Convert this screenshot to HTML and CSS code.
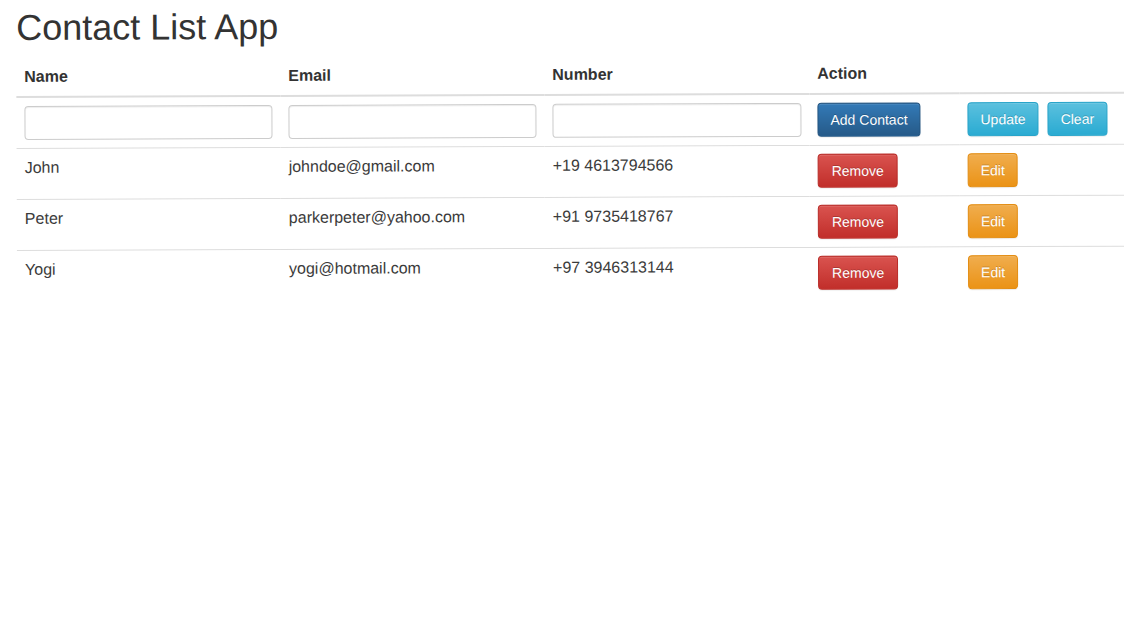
FILE: index.html
```html
<!DOCTYPE html>
<html lang="en">
<head>
<meta charset="utf-8">
<title>Contact List App</title>
<link rel="stylesheet" href="styles.css">
</head>
<body>
<div class="page">
  <h1 class="title">Contact List App</h1>
  <table class="contacts">
    <colgroup>
      <col class="c-name">
      <col class="c-email">
      <col class="c-number">
      <col class="c-action">
      <col class="c-extra">
    </colgroup>
    <thead>
      <tr>
        <th>Name</th>
        <th>Email</th>
        <th>Number</th>
        <th>Action</th>
        <th></th>
      </tr>
    </thead>
    <tbody>
      <tr>
        <td><input class="field" type="text"></td>
        <td><input class="field" type="text"></td>
        <td><input class="field" type="text"></td>
        <td><button class="btn btn-primary">Add Contact</button></td>
        <td><button class="btn btn-info">Update</button><button class="btn btn-info btn-gap">Clear</button></td>
      </tr>
      <tr>
        <td>John</td>
        <td>johndoe@gmail.com</td>
        <td>+19 4613794566</td>
        <td><button class="btn btn-danger">Remove</button></td>
        <td><button class="btn btn-warning">Edit</button></td>
      </tr>
      <tr>
        <td>Peter</td>
        <td>parkerpeter@yahoo.com</td>
        <td>+91 9735418767</td>
        <td><button class="btn btn-danger">Remove</button></td>
        <td><button class="btn btn-warning">Edit</button></td>
      </tr>
      <tr>
        <td>Yogi</td>
        <td>yogi@hotmail.com</td>
        <td>+97 3946313144</td>
        <td><button class="btn btn-danger">Remove</button></td>
        <td><button class="btn btn-warning">Edit</button></td>
      </tr>
    </tbody>
  </table>
</div>
</body>
</html>
```

FILE: styles.css
```css
html, body {
  margin: 0;
  padding: 0;
  background: #fff;
}

body {
  font-family: "Liberation Sans", Arial, Helvetica, sans-serif;
  font-size: 16px;
  line-height: 1.42857;
  color: #333;
}

.page {
  padding: 8px 0 0 16px;
  transform: rotate(-0.22deg);
  transform-origin: 0 0;
}

.title {
  margin: 0 0 10px 0;
  font-size: 36px;
  font-weight: 500;
  line-height: 39.6px;
  color: #333;
}

.contacts {
  width: 1108px;
  border-collapse: collapse;
  border-spacing: 0;
  table-layout: fixed;
}

.c-name, .c-email { width: 264px; }
.c-number { width: 265px; }
.c-action { width: 150px; }

.contacts th,
.contacts td {
  padding: 8px;
  text-align: left;
  font-size: 16px;
  line-height: 1.42857;
}

.contacts th {
  font-weight: bold;
  vertical-align: bottom;
  border-bottom: 2px solid #ddd;
}

.contacts td {
  vertical-align: top;
  border-top: 1px solid #ddd;
  color: #3b3b3b;
}

.contacts tbody tr:first-child td {
  border-top: 0;
}

.field {
  display: block;
  width: 100%;
  height: 34px;
  box-sizing: border-box;
  padding: 6px 12px;
  font-family: inherit;
  font-size: 14px;
  color: #555;
  background: #fff;
  border: 1px solid #ccc;
  border-radius: 4px;
  box-shadow: inset 0 1px 1px rgba(0, 0, 0, 0.075);
  margin: 0;
}

.btn {
  display: inline-block;
  margin: 0;
  padding: 6px 12px;
  font-family: inherit;
  font-size: 14px;
  font-weight: normal;
  line-height: 20px;
  color: #fff;
  border: 1px solid transparent;
  border-radius: 4px;
  text-shadow: 0 -1px 0 rgba(0, 0, 0, 0.2);
  box-shadow: inset 0 1px 0 rgba(255, 255, 255, 0.15), 0 1px 1px rgba(0, 0, 0, 0.075);
  cursor: pointer;
  vertical-align: middle;
}

.btn-gap { margin-left: 9px; }

.btn-primary {
  background: linear-gradient(to bottom, #337ab7 0%, #265a88 100%);
  border-color: #245580;
}

.btn-info {
  background: linear-gradient(to bottom, #5bc0de 0%, #2aabd2 100%);
  border-color: #28a4c9;
}

.btn-danger {
  padding: 6px 13px;
  background: linear-gradient(to bottom, #d9534f 0%, #c12e2a 100%);
  border-color: #b92c28;
}

.btn-warning {
  background: linear-gradient(to bottom, #f0ad4e 0%, #eb9316 100%);
  border-color: #e38d13;
}
```
